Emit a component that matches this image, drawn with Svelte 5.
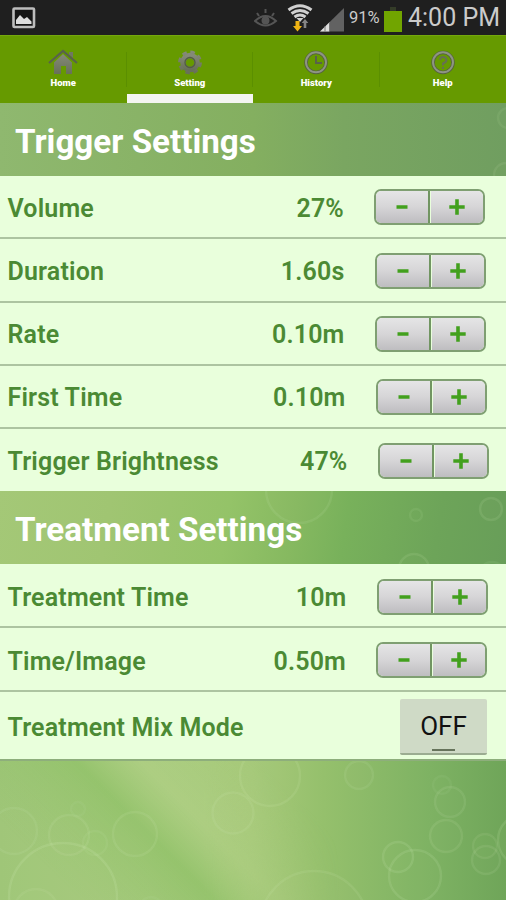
<script>
  let activeTab = $state('Setting');
  let mixMode = $state(false);

  const tabs = ['Home', 'Setting', 'History', 'Help'];

  let trigger = $state([
    { label: 'Volume', value: 27, step: 1, digits: 0, unit: '%', inset: 21 },
    { label: 'Duration', value: 1.6, step: 0.1, digits: 2, unit: 's', inset: 20.5 },
    { label: 'Rate', value: 0.1, step: 0.1, digits: 2, unit: 'm', inset: 20.5 },
    { label: 'First Time', value: 0.1, step: 0.1, digits: 2, unit: 'm', inset: 19.5 },
    { label: 'Trigger Brightness', value: 47, step: 1, digits: 0, unit: '%', inset: 17.5 },
  ]);

  let treatment = $state([
    { label: 'Treatment Time', value: 10, step: 1, digits: 0, unit: 'm', inset: 18.5 },
    { label: 'Time/Image', value: 0.5, step: 0.1, digits: 2, unit: 'm', inset: 19 },
  ]);

  // [cx, cy, r, opacity]
  const bubbles = [
    [14, 831, 23, 0.13], [69, 835, 20, 0.14], [63, 897, 54, 0.18], [95, 843, 12, 0.1],
    [135, 834, 22, 0.14], [78, 809, 7, 0.08], [36, 911, 22, 0.12], [151, 908, 11, 0.08],
    [233, 813, 20.5, 0.14], [270, 776, 30, 0.15], [359, 775, 14, 0.13], [442, 785, 9, 0.08],
    [450, 802, 15, 0.13], [446, 836, 16, 0.14], [398, 857, 15, 0.16], [415, 876, 26, 0.16],
    [486, 860, 14, 0.13], [314, 925, 54, 0.14], [524, 840, 26, 0.17], [485, 846, 12, 0.12],
    [299, 490, 33, 0.13], [491, 509, 11, 0.14], [416, 515, 6, 0.1], [414, 569, 15, 0.14],
    [492, 575, 13, 0.1], [508, 118, 10, 0.1], [506, 175, 12, 0.12],
  ];

  function change(item, dir) {
    item.value = Math.max(0, item.value + dir * item.step);
  }
</script>

{#snippet stepperRow(item)}
  <div class="row" style:padding-right="{item.inset}px">
    <span class="label">{item.label}</span>
    <span class="value">{item.value.toFixed(item.digits)}{item.unit}</span>
    <div class="stepper">
      <button aria-label="Decrease {item.label}" onclick={() => change(item, -1)}>
        <svg width="16" height="16" viewBox="0 0 16 16"><path d="M2.5 8h11" /></svg>
      </button>
      <button aria-label="Increase {item.label}" onclick={() => change(item, 1)}>
        <svg width="16" height="16" viewBox="0 0 16 16"><path d="M0.3 8h15.4M8 0.3v15.4" /></svg>
      </button>
    </div>
  </div>
{/snippet}

<div class="screen">
  <svg class="backdrop" width="506" height="900" viewBox="0 0 506 900">
    <defs>
      <linearGradient id="top" x1="0" y1="0" x2="1" y2="0">
        <stop offset="0" stop-color="#8fb86f" />
        <stop offset="0.5" stop-color="#84af60" />
        <stop offset="0.68" stop-color="#7aa661" />
        <stop offset="1" stop-color="#709e60" />
      </linearGradient>
      <linearGradient id="middle" gradientUnits="userSpaceOnUse" x1="0" y1="480" x2="506" y2="560">
        <stop offset="0" stop-color="#a4c877" />
        <stop offset="0.22" stop-color="#a0c572" />
        <stop offset="0.45" stop-color="#94c368" />
        <stop offset="0.58" stop-color="#86b960" />
        <stop offset="0.68" stop-color="#78b15b" />
        <stop offset="0.86" stop-color="#6da459" />
        <stop offset="1" stop-color="#689e59" />
      </linearGradient>
      <linearGradient id="bottom" gradientUnits="userSpaceOnUse" x1="0" y1="830" x2="506" y2="830">
        <stop offset="0" stop-color="#9fc678" />
        <stop offset="0.3" stop-color="#a8cb7e" />
        <stop offset="0.5" stop-color="#a6c979" />
        <stop offset="0.64" stop-color="#95c06c" />
        <stop offset="0.85" stop-color="#7eb263" />
        <stop offset="1" stop-color="#6fa559" />
      </linearGradient>
      <linearGradient id="ray" gradientUnits="userSpaceOnUse" x1="70" y1="890" x2="230" y2="730">
        <stop offset="0" stop-color="#98c472" stop-opacity="0" />
        <stop offset="0.42" stop-color="#92c26a" stop-opacity="0.85" />
        <stop offset="0.62" stop-color="#afcf84" stop-opacity="0.7" />
        <stop offset="1" stop-color="#adce82" stop-opacity="0" />
      </linearGradient>
      <linearGradient id="fade">
        <stop offset="0.6" stop-color="#fff" />
        <stop offset="1" stop-color="#000" />
      </linearGradient>
      <mask id="fadeRight"><rect y="755" width="340" height="145" fill="url(#fade)" /></mask>
    </defs>
    <rect width="506" height="300" fill="url(#top)" />
    <rect y="300" width="506" height="400" fill="url(#middle)" />
    <rect y="700" width="506" height="200" fill="url(#bottom)" />
    <rect y="755" width="340" height="145" fill="url(#ray)" mask="url(#fadeRight)" />
    {#each bubbles as [cx, cy, r, opacity]}
      <circle {cx} {cy} {r} fill="#c9ebab" fill-opacity={opacity * 0.2} stroke="#d6f0bd" stroke-opacity={opacity * 0.85} stroke-width="2.4" />
    {/each}
  </svg>

  <header class="status-bar">
    <svg class="picture" width="24" height="22" viewBox="0 0 24 22">
      <rect x="1.5" y="1.5" width="20.5" height="18.5" rx="1" fill="#151515" stroke="#bdbdbd" stroke-width="2.6" />
      <path d="M4 17v-4l4-5 4 4 3-2 4.5 4.5V17z" fill="#ddd" />
    </svg>
    <div class="indicators">
      <svg width="24" height="20" viewBox="0 0 24 20" fill="none" stroke="#555" stroke-width="2">
        <path d="M1 13q10.5-10 21 0-10.5 9-21 0z" />
        <circle cx="11.5" cy="12.5" r="3" fill="#555" />
        <path d="M3 5l2 3M11.5 1v4M20 5l-2 3" />
      </svg>
      <svg class="wifi" width="26" height="28" viewBox="0 0 26 28" fill="none">
        <path d="M1.5 6Q13-2.5 24.5 6M4.5 9.500q8.500-6 17 0M7.500 13q5.500-4 11 0" stroke="#d0d0d0" stroke-width="3" />
        <path d="M9.500 14h7L13 18z" fill="#d0d0d0" />
        <path d="M8.500 17h4v5h2.500l-4.500 5.500L6 22h2.500z" fill="#efb313" />
        <path d="M16.700 24v-5h-2l3.300-4 3.300 4h-2v5z" fill="#858585" />
      </svg>
      <svg class="signal" width="25" height="24" viewBox="0 0 25 24">
        <path d="M0 23.500L24 0v23.500z" fill="#626262" />
        <path d="M0 23.500L9 14.700v8.800z" fill="#ddd" />
        <path d="M5 18v5.500M9.500 14v9.500" stroke="#777" />
      </svg>
      <span class="percent">91%</span>
      <svg class="battery" width="18" height="25" viewBox="0 0 18 25">
        <rect x="6" width="6" height="4" fill="#343c28" />
        <rect y="4" width="18" height="21" fill="#71a500" />
      </svg>
      <span class="clock">4:00 PM</span>
    </div>
  </header>

  <nav class="tabs">
    {#each tabs as tab}
      <button class="tab" class:active={activeTab === tab} onclick={() => (activeTab = tab)}>
        <svg width="32" height="26" viewBox="0 0 32 26">
          <defs>
            <linearGradient id="metal-{tab}" x1="0" y1="0" x2="0" y2="1">
              <stop offset="0" stop-color="#858a78" />
              <stop offset="1" stop-color="#687059" />
            </linearGradient>
          </defs>
          {#if tab === 'Home'}
            <path d="M7 13.500l9-8.500 9 8.500V25h-6v-8h-5v8H7z" fill="url(#metal-{tab})" />
            <path d="M22 3h4v6l-4-3.500z" fill="#707762" />
            <path d="M2 14L16 2l14 12" fill="none" stroke="#59624b" stroke-width="2.2" />
          {:else if tab === 'Setting'}
            <g fill="none" stroke="url(#metal-{tab})">
              <circle cx="16" cy="13.500" r="7" stroke-width="5.500" />
              <circle cx="16" cy="13.500" r="10.300" stroke-width="3.200" stroke-dasharray="4.500 3.590" />
              <circle cx="16" cy="13.500" r="5" stroke="#535d45" stroke-width="1.300" />
            </g>
          {:else if tab === 'History'}
            <circle cx="16" cy="13.500" r="10" fill="none" stroke="#555f42" stroke-width="3.500" />
            <circle cx="16" cy="13.300" r="10" fill="none" stroke="#8e9583" stroke-width="2" />
            <path d="M16 7v7h6" fill="none" stroke="#59624b" stroke-width="2" />
          {:else}
            <circle cx="16" cy="13.500" r="10" fill="none" stroke="#555f42" stroke-width="3.500" />
            <circle cx="16" cy="13.300" r="10" fill="none" stroke="#8e9583" stroke-width="2" />
            <path d="M13 11q0-3 3-3t3.500 3q0 2-3.500 3.500v2M16 18v2" fill="none" stroke="#667053" stroke-width="2" />
          {/if}
        </svg>
        <span>{tab}</span>
      </button>
    {/each}
  </nav>

  <h2>Trigger Settings</h2>
  <section>
    {#each trigger as item}
      {@render stepperRow(item)}
    {/each}
  </section>

  <h2>Treatment Settings</h2>
  <section class="treatment">
    {#each treatment as item}
      {@render stepperRow(item)}
    {/each}
    <div class="row mix">
      <span class="label">Treatment Mix Mode</span>
      <button class="toggle" class:on={mixMode} onclick={() => (mixMode = !mixMode)}>
        {mixMode ? 'ON' : 'OFF'}
      </button>
    </div>
  </section>
</div>

<style>
  :global(body) {
    background: #8fbd69;
  }

  .screen {
    position: relative;
    width: 506px;
    height: 900px;
    overflow: hidden;
    font-family: Roboto, 'Liberation Sans', sans-serif;
  }

  .backdrop {
    position: absolute;
    inset: 0;
    z-index: -1;
  }

  button {
    font-family: inherit;
    border: 0;
    margin: 0;
    padding: 0;
    cursor: pointer;
  }

  .status-bar {
    display: flex;
    justify-content: space-between;
    height: 35px;
    padding: 0 6px 0 12px;
    box-sizing: border-box;
    background: #1f1f1f;
    color: #cbcbcb;
  }

  .picture {
    margin-top: 7px;
  }

  .indicators {
    display: flex;
    align-items: center;
  }

  .indicators svg {
    flex: none;
  }

  .wifi {
    margin-left: 9px;
  }

  .signal {
    margin: 4px 4px 0 7px;
  }

  .percent {
    width: 32px;
    font-size: 16.5px;
    white-space: nowrap;
  }

  .battery {
    margin: 3px 6px 0 3px;
  }

  .clock {
    width: 92px;
    font-size: 25px;
    white-space: nowrap;
  }

  .tabs {
    display: grid;
    grid-template-columns: repeat(4, 1fr);
    height: 68px;
    background: #669a00;
    box-shadow: inset 0 1px #75a80c;
  }

  .tab {
    display: flex;
    flex-direction: column;
    align-items: center;
    padding-top: 14px;
    background: linear-gradient(#5b8f00, #5b8f00) right 17px / 1px 35px no-repeat;
    color: #fff;
    font-size: 9.5px;
    font-weight: 900;
    line-height: 12px;
  }

  .tab span {
    margin-top: 2px;
  }

  .tab:last-child {
    background: none;
  }

  .tab.active {
    border-bottom: 9px solid #f4f5f1;
  }

  h2 {
    display: flex;
    align-items: center;
    height: 73.3px;
    margin: 0;
    padding: 3px 15px 0;
    box-sizing: border-box;
    color: #fff;
    font-size: 33.2px;
    font-weight: 700;
  }

  .row {
    display: flex;
    align-items: center;
    height: 63.2px;
    padding-left: 7.5px;
    box-sizing: border-box;
    border-bottom: 2px solid #adc4a1;
    background: #e9ffdc;
    color: #4b8a34;
    font-size: 25px;
    font-weight: 600;
    letter-spacing: 0.17px;
  }

  .row:last-child {
    height: 62px;
    border-bottom: 0;
  }

  .label,
  .value {
    padding-top: 3px;
  }

  .row:last-child .label,
  .row:last-child .value {
    padding-top: 2px;
  }

  .value {
    margin-left: auto;
    margin-right: 30px;
  }

  .stepper {
    display: flex;
    gap: 1px;
    width: 111px;
    height: 36px;
    margin-top: 1px;
    box-sizing: border-box;
    border: 2px solid #7f9f72;
    border-radius: 7px;
    background: #e9ffdc;
    overflow: hidden;
  }

  .stepper button {
    display: flex;
    flex: 1;
    align-items: center;
    justify-content: center;
    background: linear-gradient(#e5e5e6, #d6d5d7 50%, #bebdc0);
  }

  .stepper button:first-child {
    border-right: 2px solid #719562;
  }

  .stepper path {
    stroke: #42a01d;
    stroke-width: 3.6;
  }

  .treatment .row {
    height: 63.6px;
  }

  .treatment .stepper {
    margin-top: 3px;
  }

  .treatment .label,
  .treatment .value {
    padding-top: 5px;
  }

  .treatment .row.mix {
    height: 69.5px;
    padding-right: 19px;
    border-bottom: 2px solid #8eae7c;
  }

  .treatment .mix .label {
    padding-top: 5px;
  }

  .toggle {
    position: relative;
    width: 87px;
    height: 56px;
    margin-top: 3px;
    margin-left: auto;
    border-bottom: 2px solid #9bac91;
    border-radius: 2px;
    background: #cfdac6;
    color: #111;
    font-size: 26px;
  }

  .toggle::after {
    content: '';
    position: absolute;
    left: 32px;
    bottom: 2px;
    width: 23px;
    height: 2px;
    background: #66735b;
  }

  .toggle.on::after {
    background: #42a01d;
  }
</style>
